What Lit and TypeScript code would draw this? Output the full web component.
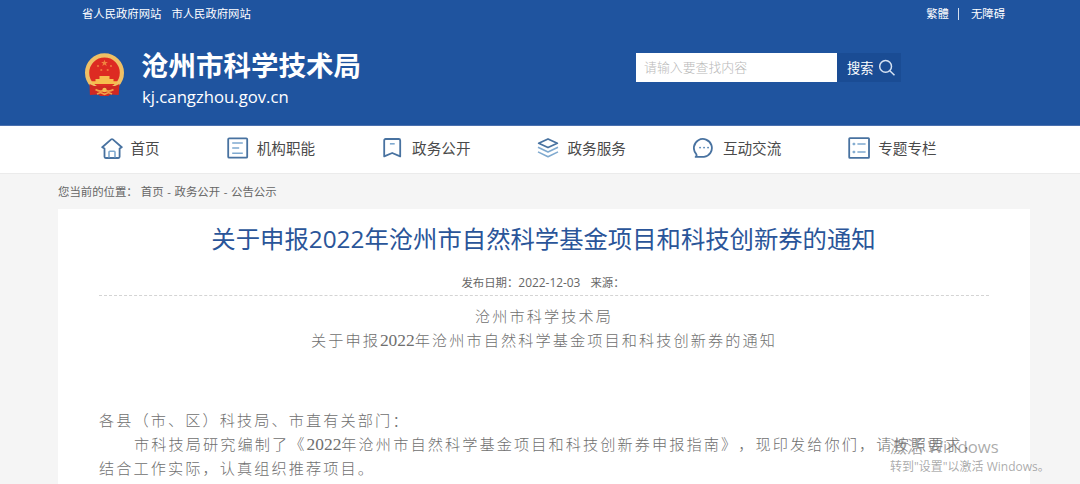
import { LitElement, html, svg, css } from 'lit';
import { customElement } from 'lit/decorators.js';

const ICONS: Record<string, unknown> = {
  home: svg`
    <path d="M1.2 10.2 10.2 2.4a1.3 1.3 0 0 1 1.6 0l9 7.8-2.2 1.3v8.3a1.2 1.2 0 0 1-1.2 1.2H4.7a1.2 1.2 0 0 1-1.2-1.2v-8.3z" />
    <path class="soft" d="M8 20.5v-5.3a.9.9 0 0 1 .9-.9h4.2a.9.9 0 0 1 .9.9v5.3" />`,
  list: svg`
    <rect x="1.2" y="1.3" width="19" height="19.4" rx="1" />
    <path class="soft" d="M5.2 6h10.6M5.2 11h7M5.2 16.2h10.6" />`,
  bookmark: svg`
    <path d="M2.2 3.4A1.4 1.4 0 0 1 3.6 2h13.2a1.4 1.4 0 0 1 1.4 1.4v16L10.2 16l-8 3.4z" />
    <path class="soft" d="M7.9 6.8h4.8" />`,
  layers: svg`
    <path d="M11 2 20.3 6.3 11 10.5 1.7 6.3z" />
    <path class="soft" d="M1 10.2 11 15l10-4.8M1 14.9 11 19.7l10-4.8" />`,
  chat: svg`
    <path d="M2.6 19.9c1.1-.7 1.3-1.7.5-3A9 9 0 1 1 11 19.9z" />
    <path class="dots" d="M7 10.6h.1M11 10.6h.1M15 10.6h.1" />`,
  columns: svg`
    <rect x="1.2" y="1.2" width="19.8" height="19.6" rx=".6" />
    <path class="soft" d="M4.5 7h2.8M9.4 7h8.2M4.5 15h2.8M9.4 15h8.2" />
    <path class="soft" d="M5.9 5.8v2.4M5.9 13.8v2.4" />`,
};

const NAV_ITEMS = [
  { icon: 'home', label: '首页' },
  { icon: 'list', label: '机构职能' },
  { icon: 'bookmark', label: '政务公开' },
  { icon: 'layers', label: '政务服务' },
  { icon: 'chat', label: '互动交流' },
  { icon: 'columns', label: '专题专栏' },
];

@customElement('site-header')
export class SiteHeader extends LitElement {
  static styles = css`
    :host {
      display: block;
      height: 126px;
      box-sizing: border-box;
      padding: 5px 75px 0 82px;
      background-color: #1f549f;
      border-bottom: 1px solid #4a70ae;
      color: #fff;
    }

    .top-bar {
      display: flex;
      justify-content: space-between;
      height: 17px;
      font-size: 11.35px;
      line-height: 17px;
    }

    .links {
      display: flex;
      gap: 10px;
    }

    .tools {
      display: flex;
      align-items: center;
      gap: 9px;
    }

    .divider {
      width: 1px;
      height: 12px;
      margin-right: 3px;
      background-color: #d5dfee;
    }

    .brand-row {
      display: flex;
      justify-content: space-between;
      padding: 26px 104px 0 2px;
    }

    .brand {
      display: flex;
      gap: 16px;
    }

    .emblem {
      width: 41px;
      height: 44px;
      margin-top: 5px;
    }

    .name {
      font-size: 27.5px;
      font-weight: 700;
      line-height: 36px;
    }

    .domain {
      padding-left: 1px;
      font-family: 'Open Sans', sans-serif;
      font-size: 16.7px;
      line-height: 25px;
    }

    .search {
      display: flex;
      height: 29px;
      margin-top: 5px;
    }

    .field {
      width: 201px;
      box-sizing: border-box;
      padding-left: 8px;
      background-color: #fff;
      color: #b9b9b9;
      font-size: 12.9px;
      font-weight: 300;
      line-height: 29px;
    }

    .button {
      display: flex;
      align-items: center;
      gap: 5px;
      width: 64px;
      box-sizing: border-box;
      padding-left: 10px;
      background-color: #1a4c94;
      font-size: 13.2px;
    }

    .button svg {
      width: 18px;
      height: 18px;
    }
  `;

  render() {
    return html`
      <div class="top-bar">
        <div class="links">
          <span>省人民政府网站</span>
          <span>市人民政府网站</span>
        </div>
        <div class="tools">
          <span>繁體</span>
          <span class="divider"></span>
          <span>无障碍</span>
        </div>
      </div>
      <div class="brand-row">
        <div class="brand">
          <svg class="emblem" viewBox="0 0 41 44">
            <circle cx="20.5" cy="19.8" r="17.4" fill="#dd2b22" stroke="#efc065" stroke-width="4.2" />
            <path d="M5.5 31l4.500 2h21l4.500-2-.8 11-8-.6-2.4 1.6h-8l-2.4-1.6-8 .6z" fill="#cf2822" />
            <path d="M20.5 6.7l.9 2.4h2.5l-2 1.5.8 2.5-2.2-1.5-2.2 1.5.8-2.5-2-1.5h2.5z" fill="#f0843f" />
            <g fill="#ee7a3c">
              <circle cx="14" cy="13" r="1.1" />
              <circle cx="27" cy="13" r="1.1" />
              <circle cx="17.3" cy="17" r="1.1" />
              <circle cx="23.7" cy="17" r="1.1" />
            </g>
            <path d="M15.5 23h10v3h4v2.3h3.500V31H8v-2.7h3.500V26h4z" fill="#f6bd4e" />
            <path d="M11.5 36.5q4.500 3 9 .5 4.500 2.500 9-.5M13 41l3.500-1.500 4 1.800 4-1.800 3.500 1.500" fill="none" stroke="#f2a048" stroke-width="1.6" />
            <circle cx="20.5" cy="37" r="2.2" fill="#f4bb50" />
          </svg>
          <div>
            <div class="name">沧州市科学技术局</div>
            <div class="domain">kj.cangzhou.gov.cn</div>
          </div>
        </div>
        <div class="search">
          <div class="field">请输入要查找内容</div>
          <div class="button">
            <span>搜索</span>
            <svg viewBox="0 0 18 18" fill="none" stroke="#d6e2f3" stroke-width="1.5">
              <circle cx="7.6" cy="7.4" r="5.9" />
              <path d="M11.8 11.7l4.7 4.6" />
            </svg>
          </div>
        </div>
      </div>
    `;
  }
}

@customElement('site-nav')
export class SiteNav extends LitElement {
  static styles = css`
    :host {
      display: flex;
      align-items: center;
      gap: 67px;
      height: 48px;
      box-sizing: border-box;
      padding: 0 0 3px 100.5px;
      background-color: #fff;
      border-bottom: 1px solid #ebebeb;
    }

    .item {
      display: flex;
      align-items: center;
      gap: 8px;
      color: #4a4a4a;
      font-size: 14.6px;
      line-height: 22px;
    }

    .icon {
      width: 22px;
      height: 22px;
      fill: none;
      stroke: #4872a0;
      stroke-width: 1.8;
      stroke-linejoin: round;
    }

    .soft {
      stroke: #7fa9cf;
      stroke-width: 1.6;
    }

    .dots {
      stroke: #5f8dbb;
      stroke-width: 1.9;
      stroke-linecap: round;
    }
  `;

  render() {
    return NAV_ITEMS.map(
      (item) => html`
        <div class="item">
          <svg class="icon" viewBox="0 0 22 22">${ICONS[item.icon]}</svg>
          <span>${item.label}</span>
        </div>
      `
    );
  }
}

@customElement('notice-article')
export class NoticeArticle extends LitElement {
  static styles = css`
    :host {
      display: block;
      height: 275px;
      box-sizing: border-box;
      padding: 11px 41px 0;
      background-color: #fff;
    }

    .title {
      margin: 0;
      padding-right: 1px;
      color: #2a5599;
      font-size: 24.35px;
      font-weight: 400;
      line-height: 38px;
      text-align: center;
      white-space: nowrap;
    }

    .meta {
      display: flex;
      align-items: baseline;
      justify-content: center;
      gap: 10px;
      height: 38px;
      box-sizing: border-box;
      padding: 15px 2px 0 0;
      border-bottom: 1px dashed #d4d4d4;
      color: #666;
      font-size: 11.4px;
      line-height: 18px;
    }

    .date {
      font-size: 11.9px;
    }

    .body {
      padding-top: 8px;
      color: #6f6f6f;
      font-size: 15.2px;
      font-weight: 300;
      letter-spacing: 2.07px;
      line-height: 24.3px;
      text-spacing-trim: space-all;
      white-space: nowrap;
    }

    .body p {
      margin: 0;
    }

    .center {
      text-align: center;
    }

    .body .salutation {
      padding-top: 55px;
    }

    .indent {
      padding-left: 35px;
    }

    .num {
      font-family: 'Liberation Serif', serif;
      font-size: 17.4px;
      font-weight: 400;
      letter-spacing: 0;
      line-height: 1;
    }
  `;

  render() {
    const year = html`<span class="num">2022</span>`;
    return html`
      <h1 class="title">关于申报2022年沧州市自然科学基金项目和科技创新券的通知</h1>
      <div class="meta">
        <span>发布日期：<span class="date">2022-12-03</span></span>
        <span>来源：</span>
      </div>
      <div class="body">
        <p class="center">沧州市科学技术局</p>
        <p class="center">关于申报${year}年沧州市自然科学基金项目和科技创新券的通知</p>
        <p class="salutation">各县（市、区）科技局、市直有关部门：</p>
        <p class="indent">市科技局研究编制了《${year}年沧州市自然科学基金项目和科技创新券申报指南》，现印发给你们，请按照要求，</p>
        <p>结合工作实际，认真组织推荐项目。</p>
      </div>
    `;
  }
}

@customElement('app-root')
export class AppRoot extends LitElement {
  static styles = css`
    :host {
      display: block;
      position: relative;
      height: 484px;
      overflow: hidden;
      background-color: #f5f5f5;
      font-family: 'Open Sans', 'Noto Sans CJK SC', sans-serif;
    }

    .content {
      padding: 0 50px 0 58px;
    }

    .breadcrumb {
      display: flex;
      gap: 3px;
      height: 35px;
      color: #666;
      font-size: 11.4px;
      line-height: 35px;
      word-spacing: 0.7px;
    }

    /* system notice floating over the page */
    .watermark {
      position: absolute;
      left: 890px;
      top: 436px;
      color: rgba(125, 125, 125, 0.65);
      white-space: nowrap;
    }

    .watermark-title {
      font-size: 16.7px;
      line-height: 22px;
    }

    .watermark-text {
      font-size: 12px;
      line-height: 18px;
    }
  `;

  render() {
    return html`
      <site-header></site-header>
      <site-nav></site-nav>
      <div class="content">
        <div class="breadcrumb">
          <span>您当前的位置：</span>
          <span>首页 - 政务公开 - 公告公示</span>
        </div>
        <notice-article></notice-article>
      </div>
      <div class="watermark">
        <div class="watermark-title">激活 Windows</div>
        <div class="watermark-text">转到"设置"以激活 Windows。</div>
      </div>
    `;
  }
}
